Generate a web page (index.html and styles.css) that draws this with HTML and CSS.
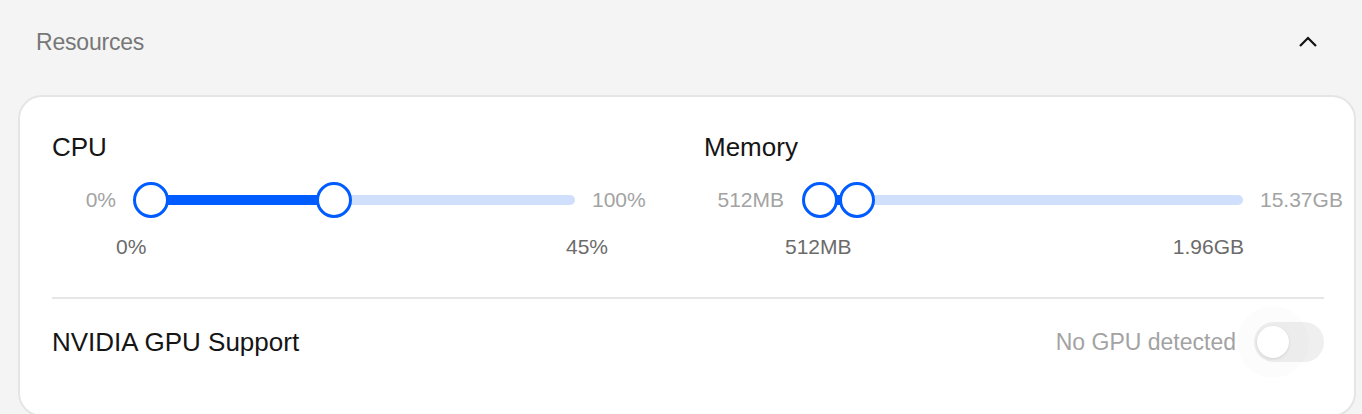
FILE: index.html
```html
<!DOCTYPE html>
<html lang="en">

<head>
    <meta charset="UTF-8" />
    <meta name="viewport" content="width=device-width, initial-scale=1.0" />
    <link rel="stylesheet" href="styles.css">
    <title>Resources</title>
</head>

<body>
    <section class="panel">
        <div class="panel-head">
            <h2 class="panel-title">Resources</h2>
            <button type="button" class="collapse" aria-label="Collapse">
                <svg width="20" height="12" viewBox="0 0 20 12">
                    <path d="M2 10 L10 2 L18 10" fill="none" stroke="#111" stroke-width="2.2" />
                </svg>
            </button>
        </div>

        <div class="card">
            <div class="limits">
                <div class="limit cpu">
                    <h3 class="limit-name">CPU</h3>
                    <div class="range">
                        <span class="range-min">0%</span>
                        <div class="slider" style="--lo: 0; --hi: 0.4316">
                            <div class="rail"></div>
                            <div class="fill"></div>
                            <span class="thumb lo"></span>
                            <span class="thumb hi"></span>
                        </div>
                        <span class="range-max">100%</span>
                    </div>
                    <div class="values">
                        <span>0%</span>
                        <span>45%</span>
                    </div>
                </div>

                <div class="limit mem">
                    <h3 class="limit-name">Memory</h3>
                    <div class="range">
                        <span class="range-min">512MB</span>
                        <div class="slider" style="--lo: 0; --hi: 0.087">
                            <div class="rail"></div>
                            <div class="fill"></div>
                            <span class="thumb lo"></span>
                            <span class="thumb hi"></span>
                        </div>
                        <span class="range-max">15.37GB</span>
                    </div>
                    <div class="values">
                        <span>512MB</span>
                        <span>1.96GB</span>
                    </div>
                </div>
            </div>

            <hr class="divider" />

            <div class="gpu">
                <span class="gpu-name">NVIDIA GPU Support</span>
                <div class="gpu-state">
                    <span class="gpu-note">No GPU detected</span>
                    <span class="switch"><span class="knob"></span></span>
                </div>
            </div>
        </div>
    </section>
</body>

</html>
```

FILE: styles.css
```css
* {
    margin: 0;
    padding: 0;
    box-sizing: border-box;
    font-family: "Liberation Sans", Arial, sans-serif;
}

body {
    background-color: #f4f4f4;
    overflow: hidden;
}

section.panel {
    padding: 0 6px 0 18px;
}

.panel-head {
    height: 84px;
    margin-bottom: 11px;
    display: flex;
    align-items: center;
    justify-content: space-between;
    padding: 0 38px 0 18px;
}

.panel-title {
    font-size: 23px;
    font-weight: normal;
    color: #777777;
    letter-spacing: -0.2px;
}

.collapse {
    border: none;
    background: none;
    display: flex;
    align-items: center;
}

.card {
    background-color: #ffffff;
    border: 2px solid #e5e5e5;
    border-radius: 24px;
    padding: 34px 30px 53px 32px;
}

.limits {
    display: grid;
    grid-template-columns: minmax(0, 1fr) minmax(0, 1fr);
    column-gap: 32px;
}

.limit-name {
    font-size: 26px;
    line-height: 32px;
    font-weight: normal;
    color: #151515;
}

.range {
    display: flex;
    align-items: center;
    margin-top: 17px;
    height: 40px;
}

.range-min,
.range-max {
    font-size: 21px;
    color: #a3a3a3;
    white-space: nowrap;
}

.range-min {
    width: 64px;
    text-align: right;
    margin-right: 17px;
    flex: none;
}

.mem .range-min {
    width: 80px;
    margin-right: 18px;
}

.range-max {
    margin-left: 17px;
}

/* the rail runs from the first thumb's centre to the right edge */
.slider {
    position: relative;
    width: 442px;
    height: 36px;
    flex: none;
}

.mem .slider {
    width: 441px;
}

.rail,
.fill {
    position: absolute;
    top: 13px;
    height: 10px;
}

.rail {
    left: 18px;
    right: 0;
    border-radius: 5px;
    background-color: #d0dffc;
}

.fill {
    left: calc(18px + var(--lo) * (100% - 18px));
    width: calc((var(--hi) - var(--lo)) * (100% - 18px));
    background-color: #005cff;
}

.thumb {
    position: absolute;
    top: 0;
    width: 36px;
    height: 36px;
    border-radius: 50%;
    border: 3.5px solid #005cff;
    background-color: #ffffff;
}

.thumb.lo {
    left: calc(var(--lo) * (100% - 18px));
}

.thumb.hi {
    left: calc(var(--hi) * (100% - 18px));
}

.values {
    display: flex;
    justify-content: space-between;
    margin-top: 15px;
    margin-left: 64px;
    width: 492px;
    font-size: 21px;
    line-height: 24px;
    color: #6b6b6b;
}

.mem .values {
    margin-left: 81px;
    width: 459px;
}

hr.divider {
    border: none;
    border-top: 2px solid #e6e6e6;
    margin-top: 38px;
}

.gpu {
    display: flex;
    align-items: center;
    justify-content: space-between;
    height: 40px;
    margin-top: 23px;
}

.gpu-name {
    font-size: 26px;
    color: #151515;
}

.gpu-state {
    display: flex;
    align-items: center;
    gap: 18px;
}

.gpu-note {
    font-size: 23px;
    color: #a3a3a3;
}

.switch {
    position: relative;
    width: 70px;
    height: 40px;
    border-radius: 20px;
    background-color: #efefef;
}

.knob {
    position: absolute;
    top: 4px;
    left: 3px;
    width: 32px;
    height: 32px;
    border-radius: 50%;
    background-color: #ffffff;
    box-shadow: 0 1px 3px rgba(0, 0, 0, 0.12), 0 0 0 20px rgba(0, 0, 0, 0.012);
}
```
